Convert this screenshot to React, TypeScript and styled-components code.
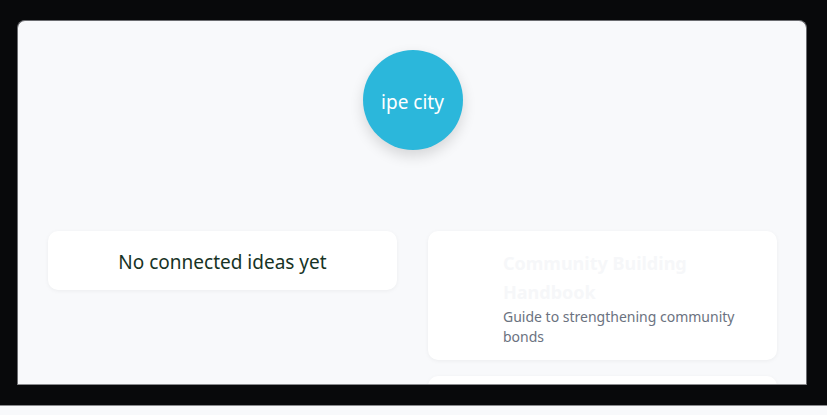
import React from "react";
import styled, { createGlobalStyle } from "styled-components";

const Global = createGlobalStyle`
  html, body { margin: 0; padding: 0; background: #f8f9fb; }
  body { font-family: "Noto Sans", "Open Sans", sans-serif; }
  * { box-sizing: border-box; }
`;

const Backdrop = styled.div`
  height: 406px;
  background: #08090b;
  border-bottom: 1px solid #8a8b8e;
  padding: 20px 20px 20px 17px;
  display: flex;
  flex-direction: column;
`;

const Panel = styled.div`
  flex: 1;
  min-height: 0;
  overflow: hidden;
  background: #f8f9fb;
  border: 1px solid #6b6c70;
  border-bottom-color: #8a8b8e;
  border-radius: 8px 8px 0 0;
  padding: 29px 29px 0 30px;
  display: flex;
  flex-direction: column;
  align-items: center;
`;

const Hub = styled.div`
  width: 100px;
  height: 100px;
  border-radius: 50%;
  background: #2bb7db;
  color: #ffffff;
  font-size: 19px;
  padding-top: 4px;
  display: flex;
  align-items: center;
  justify-content: center;
  box-shadow: 0 6px 14px rgba(0, 0, 0, 0.14);
  flex-shrink: 0;
`;

const Columns = styled.div`
  align-self: stretch;
  margin-top: 81px;
  display: grid;
  grid-template-columns: 1fr 1fr;
  column-gap: 31px;
  align-items: start;
`;

const Column = styled.div`
  display: flex;
  flex-direction: column;
  gap: 16px;
`;

const Card = styled.div`
  background: #ffffff;
  border-radius: 10px;
  box-shadow: 0 1px 4px rgba(0, 0, 0, 0.05);
`;

const EmptyCard = styled(Card)`
  height: 59px;
  display: flex;
  align-items: center;
  justify-content: center;
  font-size: 19px;
  color: #173325;
  padding-top: 3px;
`;

const ItemCard = styled(Card)<{ $tall?: boolean }>`
  min-height: ${(p) => (p.$tall ? "129px" : "60px")};
  padding: 18px 30px 12px 75px;
  display: flex;
  flex-direction: column;
`;

const ItemTitle = styled.div`
  font-size: 18px;
  font-weight: 700;
  line-height: 29px;
  color: #f6f7f9;
`;

const ItemDesc = styled.div`
  font-size: 14px;
  line-height: 20px;
  color: #6b7280;
`;

export default function App() {
  return (
    <>
      <Global />
      <Backdrop>
        <Panel>
          <Hub>ipe city</Hub>
          <Columns>
            <Column>
              <EmptyCard>No connected ideas yet</EmptyCard>
            </Column>
            <Column>
              <ItemCard $tall>
                <ItemTitle>Community Building Handbook</ItemTitle>
                <ItemDesc>Guide to strengthening community bonds</ItemDesc>
              </ItemCard>
              <ItemCard />
            </Column>
          </Columns>
        </Panel>
      </Backdrop>
    </>
  );
}
